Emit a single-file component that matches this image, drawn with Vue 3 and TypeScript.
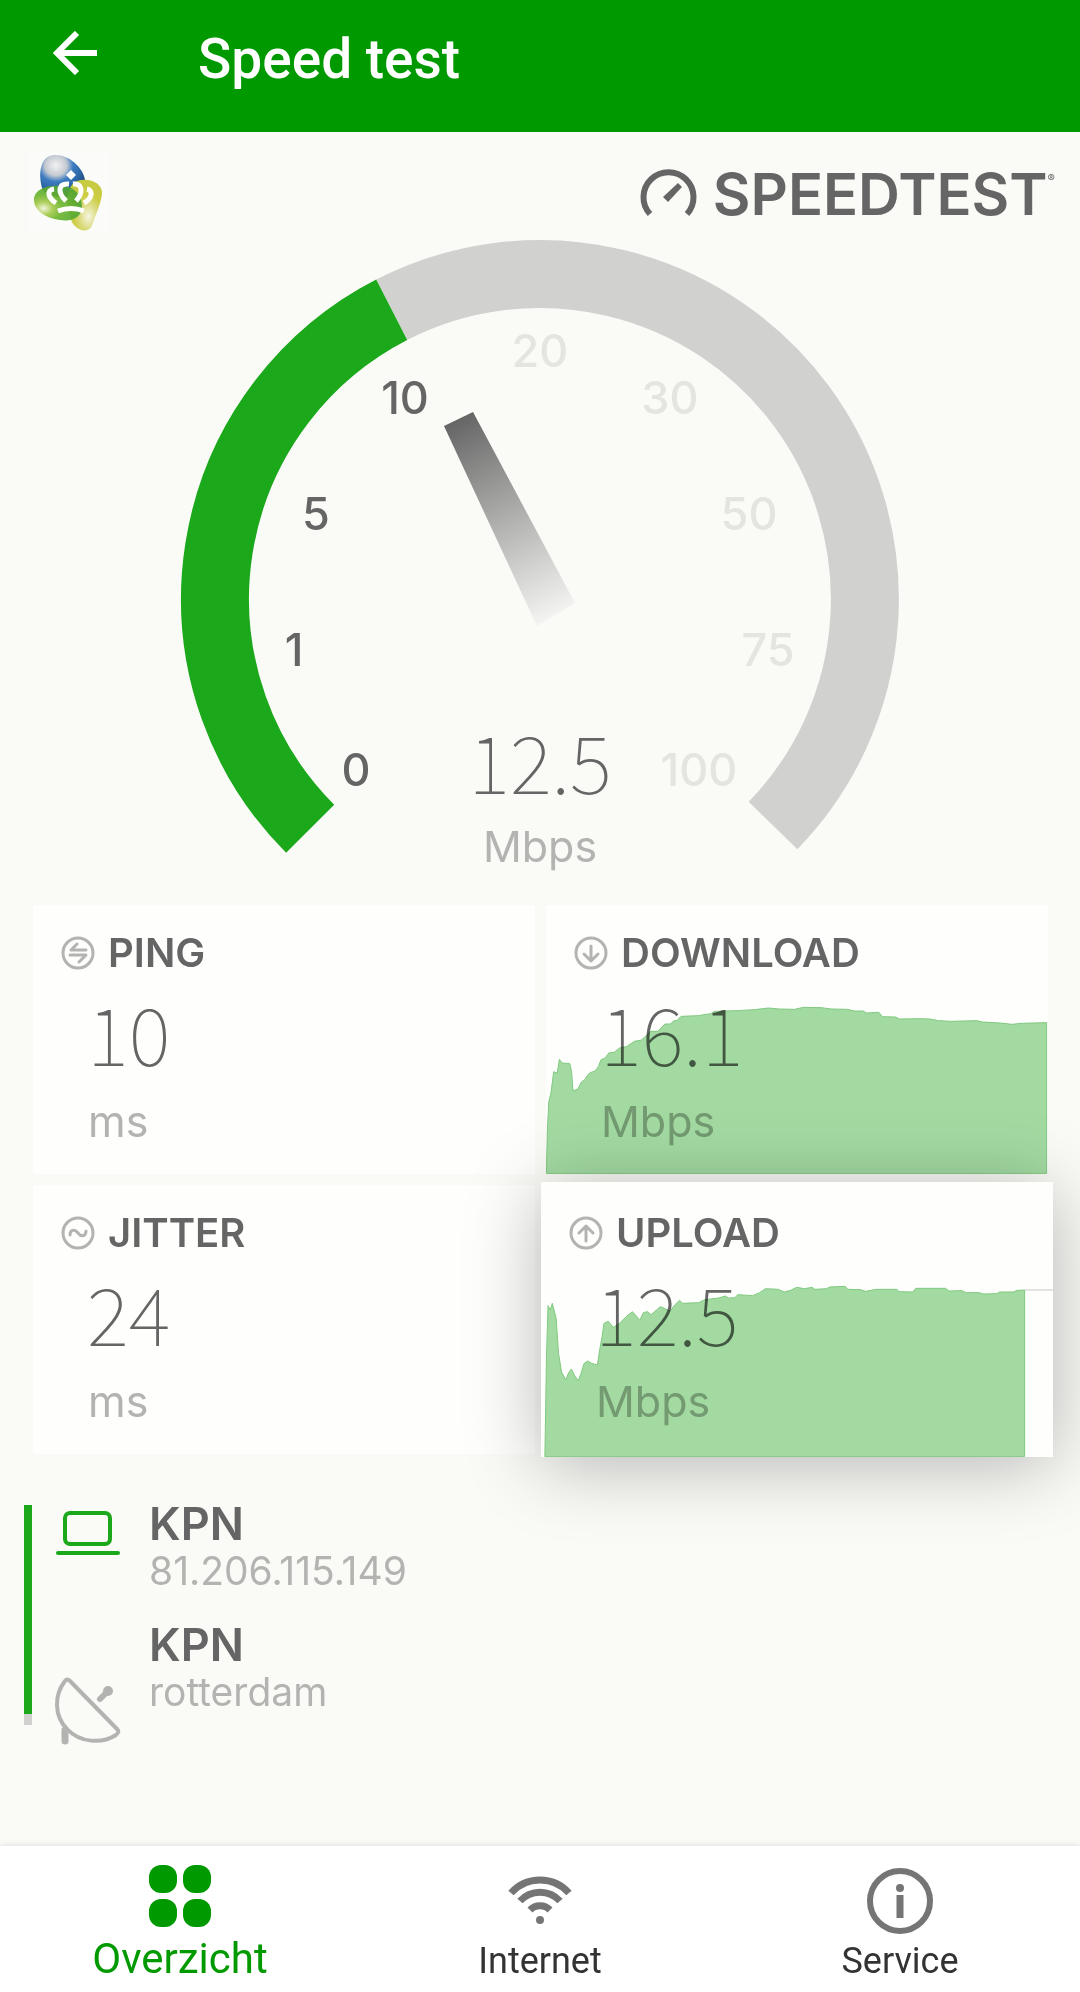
<script setup lang="ts">
interface Tick {
  label: string
  x: number
  y: number
  reached: boolean
}

interface Metric {
  id: 'ping' | 'download' | 'jitter' | 'upload'
  title: string
  value: string
  unit: string
  active?: boolean
  chart?: { viewBox: string; points: string; rest?: string }
}

const ticks: Tick[] = [
  { label: '0', x: 356, y: 786, reached: true },
  { label: '1', x: 294, y: 666, reached: true },
  { label: '5', x: 316, y: 530, reached: true },
  { label: '10', x: 405, y: 414, reached: true },
  { label: '20', x: 540, y: 367, reached: false },
  { label: '30', x: 670, y: 414, reached: false },
  { label: '50', x: 749, y: 530, reached: false },
  { label: '75', x: 768, y: 666, reached: false },
  { label: '100', x: 699, y: 786, reached: false },
]

const metrics: Metric[] = [
  { id: 'ping', title: 'PING', value: '10', unit: 'ms' },
  {
    id: 'download',
    title: 'DOWNLOAD',
    value: '16.1',
    unit: 'Mbps',
    chart: {
      viewBox: '46 45 1431 807',
      points:
        '47,851 50,720 54,635 60,610 68,545 78,550 84,508 92,519 114,521 119,545 123,603 137,597 147,576 158,568 162,558 172,548 186,543 195,530 203,509 215,504 225,489 240,487 256,474 275,470 298,454 318,450 345,424 365,424 385,402 400,402 410,393 420,391 431,379 480,377 515,371 528,364 590,362 640,359 680,354 710,357 755,358 780,352 830,353 860,357 905,358 925,363 950,363 960,369 995,367 1005,380 1042,381 1054,387 1110,386 1140,387 1165,392 1200,394 1275,392 1290,396 1340,399 1375,403 1400,400 1473,398 1473,851',
    },
  },
  { id: 'jitter', title: 'JITTER', value: '24', unit: 'ms' },
  {
    id: 'upload',
    title: 'UPLOAD',
    value: '12.5',
    unit: 'Mbps',
    active: true,
    chart: {
      viewBox: '183 66 1316 825',
      points:
        '193,890 197,600 201,437 207,450 212,430 222,475 228,580 236,637 247,660 254,638 261,627 270,648 279,662 286,640 294,610 303,603 313,610 328,615 334,568 340,530 345,490 356,484 369,502 385,490 402,470 418,455 428,468 437,481 446,458 456,455 466,464 490,440 500,445 515,454 525,437 539,421 547,430 588,428 604,419 640,414 657,408 665,414 681,413 689,404 727,407 745,398 760,386 793,388 808,396 825,391 840,382 860,386 880,382 887,388 917,386 925,381 965,379 971,388 1005,389 1017,394 1045,388 1097,388 1104,395 1139,396 1146,385 1223,385 1232,393 1265,392 1276,398 1310,398 1320,402 1355,401 1361,396 1397,396 1407,391 1426,390 1426,890',
      rest: '1427,390 1499,390',
    },
  },
]
</script>

<template>
  <div class="screen">
    <header class="app-bar">
      <button class="back" type="button" aria-label="Back">
        <svg width="44" height="44" viewBox="0 0 44 44" fill="none" stroke="#fff" stroke-width="6">
          <path d="M44 22H5M24 2 4 22l20 20" />
        </svg>
      </button>
      <h1>Speed test</h1>
    </header>

    <main>
      <div class="brands">
        <svg class="kpn" width="80" height="84" viewBox="0 0 80 84" role="img" aria-label="KPN">
          <defs>
            <radialGradient id="blue" cx="0.35" cy="0.25" r="0.8">
              <stop offset="0" stop-color="#f2f2f2" />
              <stop offset="0.3" stop-color="#c5cad2" />
              <stop offset="0.48" stop-color="#3d7cc0" />
              <stop offset="0.72" stop-color="#2b65a5" />
              <stop offset="1" stop-color="#173a63" />
            </radialGradient>
            <radialGradient id="green" cx="0.2" cy="0.65" r="0.75">
              <stop offset="0" stop-color="#f0f4d8" />
              <stop offset="0.25" stop-color="#a5c94a" />
              <stop offset="0.5" stop-color="#6cb52c" />
              <stop offset="1" stop-color="#4fa533" />
            </radialGradient>
            <radialGradient id="lime" cx="0.6" cy="0.72" r="0.6">
              <stop offset="0" stop-color="#f6f6e0" />
              <stop offset="0.4" stop-color="#dcdc85" />
              <stop offset="0.7" stop-color="#cdce45" />
              <stop offset="1" stop-color="#c8ca42" />
            </radialGradient>
          </defs>
          <rect width="80" height="84" fill="#fbfcf9" />
          <path d="M13 38C9 24 11 6 25 5c14-1 29 12 31 25 1 10-8 17-20 17-11 0-20-1-23-9z" fill="url(#blue)" />
          <path d="M48 31c12-4 26 2 25 13-1 9-6 20-9 29-3 10-12 9-18 3-8-7-12-40 2-45z" fill="url(#lime)" />
          <path d="M5 50c0-11 14-15 27-14 14 0 21 10 21 20 0 12-11 16-22 14C16 68 5 60 5 50z" fill="url(#green)" fill-opacity="0.9" />
          <path d="m42 20 5 5-5 5-5-5z" fill="#fff" />
          <path d="M27 53c-8-5-10-13-2-14M37 51c-9-9-8-18 3-17M47 51c8-9 6-18-3-17M55 53c9-5 9-13 3-14" fill="none" stroke="#fff" stroke-width="5" />
          <path d="M29 61c8-3 18-3 26 0" fill="none" stroke="#fff" stroke-width="5" />
        </svg>
        <div class="speedtest">
          <svg width="57" height="49" viewBox="0 0 57 49">
            <path d="M10 46a25 25 0 1 1 37 0" fill="none" stroke="#656565" stroke-width="6" />
            <path d="m38 15 4 4-14 15-5-5z" fill="#656565" />
          </svg>
          <span>SPEEDTEST</span>
          <sup>®</sup>
        </div>
      </div>

      <svg class="gauge" viewBox="176 236 728 644" role="img" aria-label="12.5 Mbps">
        <defs>
          <linearGradient id="needle" gradientUnits="userSpaceOnUse" x1="458" y1="419" x2="557" y2="616">
            <stop offset="0" stop-color="#656565" />
            <stop offset="0.35" stop-color="#999a98" />
            <stop offset="0.75" stop-color="#d2d2d1" />
            <stop offset="1" stop-color="#f4f5f2" />
          </linearGradient>
        </defs>
        <path d="M391.700 309.800A325 325 0 0 1 773 825.500" fill="none" stroke="#d1d1cf" stroke-width="68" />
        <path d="M310.200 828.800A325 325 0 0 1 391.700 309.800" fill="none" stroke="#1ba81b" stroke-width="68" />
        <path d="m444 426 29-14 102 191-38 23z" fill="url(#needle)" />
        <text
          v-for="tick in ticks"
          :key="tick.label"
          class="tick"
          :class="{ reached: tick.reached }"
          :x="tick.x"
          :y="tick.y"
        >{{ tick.label }}</text>
        <text class="reading" x="540" y="794">12.5</text>
        <text class="reading-unit" x="540" y="862">Mbps</text>
      </svg>

      <section class="metrics">
        <article v-for="metric in metrics" :key="metric.id" class="card" :class="{ active: metric.active }">
          <h2>
            <svg width="34" height="34" viewBox="0 0 34 34" fill="none" stroke="#b3b3b1" stroke-width="3" stroke-linecap="round" stroke-linejoin="round">
              <circle cx="17" cy="17" r="15" />
              <path v-if="metric.id === 'ping'" d="M25 14H10l6-6M9 19h16l-7 7" />
              <path v-else-if="metric.id === 'download'" d="M17 10v15M10 18l7 7 7-7" />
              <path v-else-if="metric.id === 'jitter'" d="M9 19c0-6 5-6 8-2s8 4 8-2" />
              <path v-else d="M17 25V10M10 17l7-7 7 7" />
            </svg>
            {{ metric.title }}
          </h2>
          <p class="value">{{ metric.value }}</p>
          <p class="unit">{{ metric.unit }}</p>
          <svg v-if="metric.chart" class="chart" :viewBox="metric.chart.viewBox" preserveAspectRatio="none">
            <polygon :points="metric.chart.points" />
            <polyline v-if="metric.chart.rest" :points="metric.chart.rest" />
          </svg>
        </article>
      </section>

      <section class="connection">
        <div class="progress"></div>
        <div class="endpoints">
          <div class="endpoint">
            <svg width="68" height="70" viewBox="0 0 68 70" fill="none" stroke="#1ba81b" stroke-width="4" stroke-linecap="round">
              <rect x="11" y="8" width="45" height="31" rx="5" />
              <path d="M4 48h60" />
            </svg>
            <div>
              <h3>KPN</h3>
              <p>81.206.115.149</p>
            </div>
          </div>
          <div class="endpoint server">
            <svg width="68" height="70" viewBox="0 0 68 70" fill="none" stroke="#b3b3b1" stroke-width="4" stroke-linecap="round" stroke-linejoin="round">
              <path d="M11 5q2-3 5 0l47 48q3 3-1 6C48 68 26 67 13 53 0 40 0 19 11 5z" />
              <path d="M11 54v11" stroke-width="7" />
              <path d="m46 23 7-7" stroke-width="6" />
              <circle cx="54" cy="15" r="5" fill="#b3b3b1" stroke="none" />
            </svg>
            <div>
              <h3>KPN</h3>
              <p>rotterdam</p>
            </div>
          </div>
        </div>
      </section>
    </main>

    <nav>
      <a href="#overzicht" class="current" aria-current="page">
        <svg width="66" height="66" viewBox="0 0 66 66" fill="#090">
          <rect x="2" y="1" width="28" height="28" rx="12" />
          <rect x="36" y="1" width="28" height="28" rx="12" />
          <rect x="2" y="35" width="28" height="28" rx="12" />
          <rect x="36" y="35" width="28" height="28" rx="12" />
        </svg>
        <span>Overzicht</span>
      </a>
      <a href="#internet">
        <svg width="66" height="66" viewBox="0 0 66 66" fill="none" stroke="#757575" stroke-width="7">
          <path d="M4 25a39 39 0 0 1 58 0M13 33a27 27 0 0 1 40 0M23 42a14 14 0 0 1 20 0" />
          <circle cx="33" cy="52" r="4" fill="#757575" stroke="none" />
        </svg>
        <span>Internet</span>
      </a>
      <a href="#service">
        <svg width="66" height="66" viewBox="0 0 66 66" fill="none" stroke="#757575" stroke-width="6">
          <circle cx="33" cy="33" r="30" />
          <path d="M33 27v23" stroke-width="7" />
          <circle cx="33" cy="20" r="4" fill="#757575" stroke="none" />
        </svg>
        <span>Service</span>
      </a>
    </nav>
  </div>
</template>

<style>
body {
  margin: 0;
  background: #fafbf7;
}
</style>

<style scoped>
.screen {
  display: flex;
  flex-direction: column;
  min-height: 100vh;
  background: #fafbf7;
  color: #656565;
  font-family: Inter, 'Liberation Sans', sans-serif;
}

h1,
h2,
h3,
p {
  margin: 0;
}

svg {
  display: block;
  flex: none;
}

.app-bar {
  display: flex;
  align-items: flex-start;
  gap: 101px;
  padding: 27px 53px 41px;
  background: #090;
  color: #fff;
}

.back {
  padding: 4px 0 0;
  border: 0;
  background: none;
}

.app-bar h1 {
  font: 500 55px/64px Roboto, sans-serif;
}

.brands {
  display: flex;
  justify-content: space-between;
  padding: 18px 25px 0 29px;
}

.speedtest {
  display: flex;
  align-items: flex-start;
  padding-top: 18px;
}

.speedtest span {
  margin-left: 16px;
  font-size: 58px;
  font-weight: 600;
  line-height: 52px;
}

.speedtest sup {
  font-size: 11px;
  line-height: 20px;
}

.gauge {
  width: 728px;
  max-width: 100%;
  margin: 2px auto 0;
}

.gauge text {
  text-anchor: middle;
}

.tick {
  fill: #e4e5e0;
  font-size: 45px;
  font-weight: 500;
}

.reached {
  fill: #656565;
}

.reading {
  fill: #656565;
  font-family: 'Noto Sans CJK JP', sans-serif;
  font-size: 80px;
  font-weight: 100;
}

.reading-unit {
  fill: #b3b3b1;
  font-size: 43px;
}

.metrics {
  display: grid;
  grid-template-columns: 1fr 1fr;
  gap: 11px;
  padding: 25px 32px 0 33px;
}

.card {
  position: relative;
  padding: 28px 28px 29px;
  background: #fefefd;
}

.card.active {
  z-index: 1;
  margin: -3px -5px;
  padding: 31px 28px 32px;
  box-shadow: 0 8px 70px rgb(0 0 0 / 28%);
}

.card h2 {
  display: flex;
  align-items: center;
  gap: 13px;
  font-size: 40px;
  font-weight: 600;
  line-height: 40px;
}

.value {
  margin: 18px 0 0 26px;
  font: 100 80px/80px 'Noto Sans CJK JP', sans-serif;
}

.unit {
  margin: 26px 0 0 27px;
  color: #b3b3b1;
  font-size: 43px;
  line-height: 48px;
}

/* The plot tints the figures beneath it. */
.chart {
  position: absolute;
  inset: 0;
  width: 100%;
  height: 100%;
  mix-blend-mode: multiply;
}

.chart polygon {
  fill: #a4dba3;
  stroke: #80ca80;
  vector-effect: non-scaling-stroke;
}

.chart polyline {
  fill: none;
  stroke: #c9c9c8;
  vector-effect: non-scaling-stroke;
}

.connection {
  display: flex;
  gap: 22px;
  padding: 51px 24px 100px;
}

.progress {
  width: 8px;
  height: 220px;
  background: linear-gradient(#1ba81b 95%, #d1d1cf 95%);
}

.endpoint {
  display: flex;
  gap: 27px;
}

.endpoint h3 {
  font-size: 45px;
  font-weight: 600;
  line-height: 38px;
}

.endpoint p {
  padding-top: 4px;
  color: #b3b3b1;
  font-size: 39px;
  line-height: 48px;
}

.server {
  margin-top: 31px;
}

.server svg {
  margin-top: 50px;
}

nav {
  display: flex;
  margin-top: auto;
  background: #fff;
  box-shadow: 0 -2px 5px rgb(0 0 0 / 8%);
}

nav a {
  display: flex;
  flex: 1;
  flex-direction: column;
  align-items: center;
  padding: 22px 0 7px;
  color: #333;
  font: 36px/50px Roboto, sans-serif;
  text-decoration: none;
}

nav a span {
  padding-top: 2px;
}

nav .current {
  padding-top: 18px;
  font-size: 42px;
  color: #090;
}

nav .current span {
  padding-top: 4px;
}
</style>
